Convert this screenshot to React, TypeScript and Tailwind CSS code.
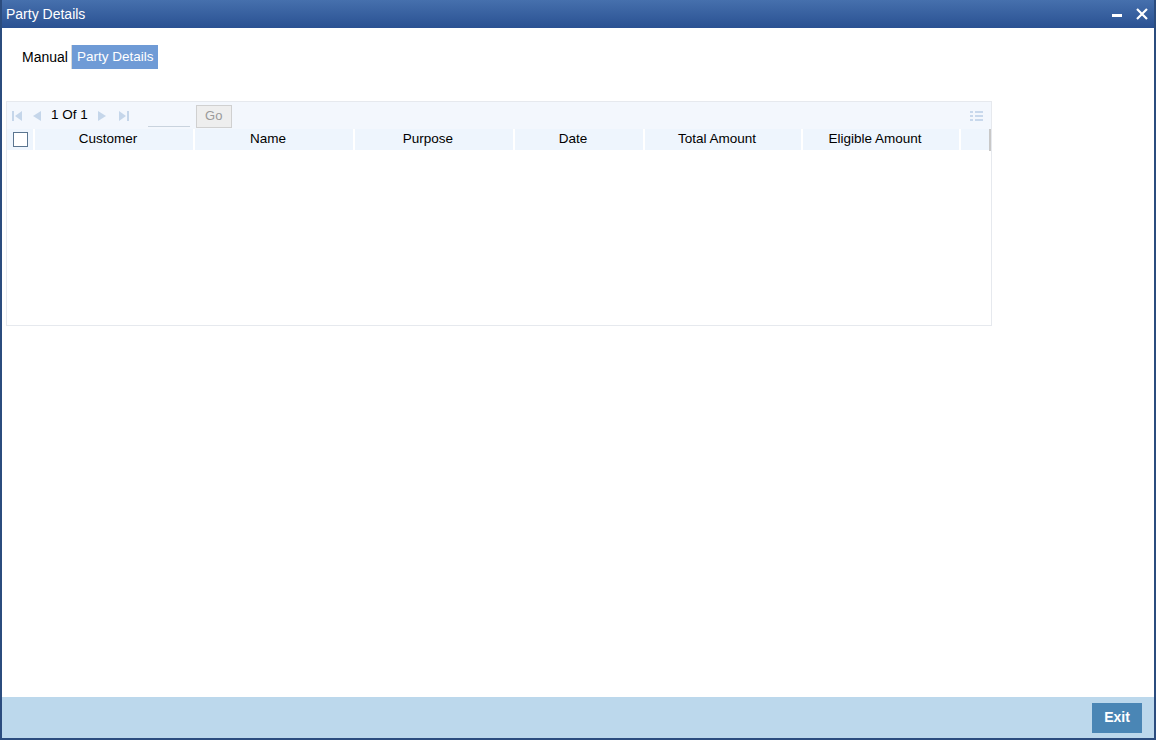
import { useState } from 'react';

const columns = [
  { label: 'Customer', w: 'w-[160px]' },
  { label: 'Name', w: 'w-[160px]' },
  { label: 'Purpose', w: 'w-[160px]' },
  { label: 'Date', w: 'w-[130px]' },
  { label: 'Total Amount', w: 'w-[158px]' },
  { label: 'Eligible Amount', w: 'w-[158px]' },
  { label: 'Amount', w: 'w-[160px]' },
];

function NavIcon({ dir, bar }: { dir: 'left' | 'right'; bar?: boolean }) {
  return (
    <svg width="12" height="12" viewBox="0 0 12 12" className="shrink-0">
      {dir === 'left' ? (
        <>
          {bar && <rect x="1" y="1" width="2" height="10" fill="#c5d6ea" />}
          <polygon points={bar ? '11,1 11,11 4,6' : '10,1 10,11 2,6'} fill="#c5d6ea" />
        </>
      ) : (
        <>
          <polygon points={bar ? '1,1 1,11 8,6' : '2,1 2,11 10,6'} fill="#c5d6ea" />
          {bar && <rect x="9" y="1" width="2" height="10" fill="#c5d6ea" />}
        </>
      )}
    </svg>
  );
}

export default function App() {
  const [tab, setTab] = useState('party');
  const [checked, setChecked] = useState(false);

  return (
    <div
      className="w-[1156px] h-[740px] flex flex-col bg-white border-x-2 border-b-2 border-[#2b4c7e] overflow-hidden text-[13px] text-black"
      style={{ fontFamily: '"Liberation Sans", Arial, sans-serif' }}
    >
      {/* title bar */}
      <div className="h-[28px] shrink-0 flex items-center justify-between pl-[5px] pr-[8px] bg-gradient-to-b from-[#4670ad] to-[#2a5192] text-white -mx-[2px]">
        <span className="text-[14px] pl-[1px]">Party Details</span>
        <div className="flex items-center gap-[14px]">
          <span className="block w-[10px] h-[3px] bg-white mt-[2px]" />
          <svg width="12" height="12" viewBox="0 0 12 12">
            <path d="M1 1 L11 11 M11 1 L1 11" stroke="white" strokeWidth="2.2" />
          </svg>
        </div>
      </div>

      {/* body */}
      <div className="flex-1 flex flex-col px-[4px]">
        <div className="flex items-stretch h-[24px] mt-[17px] ml-[12px]">
          <button
            onClick={() => setTab('manual')}
            className={`pl-[4px] pr-[3px] border-r border-[#d9d9d9] text-[14px] ${tab === 'manual' ? 'bg-[#6f9bd6] text-white' : ''}`}
          >
            Manual
          </button>
          <button
            onClick={() => setTab('party')}
            className={`px-[5px] text-[13.5px] ${tab === 'party' ? 'bg-[#6f9bd6] text-white' : ''}`}
          >
            Party Details
          </button>
        </div>

        <div className="mt-[32px] w-[986px] h-[225px] border border-[#e6e9ee] flex flex-col">
          <div className="h-[27px] shrink-0 bg-[#f3f7fd] flex items-center pl-[4px] pr-[8px]">
            <div className="flex items-center gap-[8px]">
              <NavIcon dir="left" bar />
              <NavIcon dir="left" />
            </div>
            <span className="ml-[8px] text-[13.5px]">1 Of 1</span>
            <div className="flex items-center gap-[10px] ml-[8px]">
              <NavIcon dir="right" />
              <NavIcon dir="right" bar />
            </div>
            <div className="ml-[18px] w-[42px] h-[22px] border-b border-[#c9d3de]" />
            <button className="ml-[6px] w-[36px] h-[23px] border border-[#d0d0d0] bg-[#eeeeee] text-[#9a9a9a] mt-[1px]">
              Go
            </button>
            <div className="ml-auto grid grid-cols-[3px_8px] gap-x-[2px] gap-y-[2px]">
              <span className="h-[2px] bg-[#c8d8ec]" />
              <span className="h-[2px] bg-[#c8d8ec]" />
              <span className="h-[2px] bg-[#c8d8ec]" />
              <span className="h-[2px] bg-[#c8d8ec]" />
              <span className="h-[2px] bg-[#c8d8ec]" />
              <span className="h-[2px] bg-[#c8d8ec]" />
            </div>
          </div>

          <div className="flex-1 flex overflow-hidden">
            <div className="flex-1 overflow-hidden">
              <div className="flex h-[21px] bg-[#eef5fd] w-max">
                <div className="w-[28px] flex items-center justify-center border-r-2 border-white">
                  <button
                    onClick={() => setChecked(!checked)}
                    className="w-[15px] h-[15px] border border-[#5a7590] bg-white text-[10px] leading-none"
                  >
                    {checked ? '✓' : ''}
                  </button>
                </div>
                {columns.map((c) => (
                  <div key={c.label} className={`${c.w} flex items-center justify-center pr-[12px] border-r-2 border-white text-[13.5px]`}>
                    {c.label}
                  </div>
                ))}
              </div>
            </div>
            <div className="w-[2px] h-[24px] mt-[-2px] bg-[#c8c8c8]" />
          </div>
        </div>
      </div>

      {/* footer */}
      <div className="h-[41px] shrink-0 bg-[#bcd8ec] flex items-center justify-end pr-[12px]">
        <button className="w-[50px] h-[30px] bg-[#4a86b5] text-white font-bold text-[14px]">Exit</button>
      </div>
    </div>
  );
}
